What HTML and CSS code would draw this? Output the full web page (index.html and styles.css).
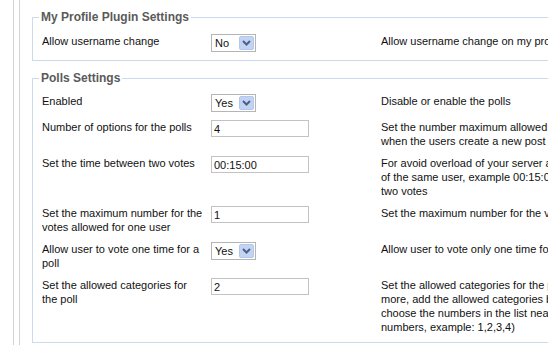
FILE: index.html
```html
<!DOCTYPE html>
<html lang="en">
<head>
    <meta charset="UTF-8">
    <title>Plugin Settings</title>
    <link rel="stylesheet" href="styles.css">
</head>
<body>
    <div class="outer">
        <div class="inner">

            <fieldset class="settings">
                <legend>My Profile Plugin Settings</legend>
                <table>
                    <tr>
                        <td class="label">Allow username change</td>
                        <td class="control">
                            <span class="select"><span class="value">No</span><span class="arrow"><svg width="9" height="6" viewBox="0 0 9 6"><path d="M1 1 L4.5 4.5 L8 1" fill="none" stroke="#4d6185" stroke-width="2"/></svg></span></span>
                        </td>
                        <td class="desc">Allow username change on my profile page</td>
                    </tr>
                </table>
            </fieldset>

            <fieldset class="settings">
                <legend>Polls Settings</legend>
                <table>
                    <tr>
                        <td class="label">Enabled</td>
                        <td class="control">
                            <span class="select"><span class="value">Yes</span><span class="arrow"><svg width="9" height="6" viewBox="0 0 9 6"><path d="M1 1 L4.5 4.5 L8 1" fill="none" stroke="#4d6185" stroke-width="2"/></svg></span></span>
                        </td>
                        <td class="desc">Disable or enable the polls</td>
                    </tr>
                    <tr>
                        <td class="label">Number of options for the polls</td>
                        <td class="control"><input type="text" class="field" value="4"></td>
                        <td class="desc">Set the number maximum allowed for the options<br>when the users create a new post with a poll</td>
                    </tr>
                    <tr>
                        <td class="label">Set the time between two votes</td>
                        <td class="control"><input type="text" class="field" value="00:15:00"></td>
                        <td class="desc">For avoid overload of your server and spam by the votes<br>of the same user, example 00:15:00 for 15 minutes between<br>two votes</td>
                    </tr>
                    <tr>
                        <td class="label">Set the maximum number for the votes allowed for one user</td>
                        <td class="control"><input type="text" class="field" value="1"></td>
                        <td class="desc">Set the maximum number for the votes allowed for one user</td>
                    </tr>
                    <tr>
                        <td class="label">Allow user to vote one time for a poll</td>
                        <td class="control">
                            <span class="select"><span class="value">Yes</span><span class="arrow"><svg width="9" height="6" viewBox="0 0 9 6"><path d="M1 1 L4.5 4.5 L8 1" fill="none" stroke="#4d6185" stroke-width="2"/></svg></span></span>
                        </td>
                        <td class="desc">Allow user to vote only one time for a poll</td>
                    </tr>
                    <tr>
                        <td class="label">Set the allowed categories for the poll</td>
                        <td class="control"><input type="text" class="field" value="2"></td>
                        <td class="desc">Set the allowed categories for the polls (if one or<br>more, add the allowed categories by comma, you can<br>choose the numbers in the list near the categories<br>numbers, example: 1,2,3,4)</td>
                    </tr>
                </table>
            </fieldset>

        </div>
    </div>
</body>
</html>
```

FILE: styles.css
```css
* {
    box-sizing: border-box;
}

body {
    margin: 0;
    background-color: #fff;
    font-family: 'Liberation Sans', Arial, sans-serif;
    font-size: 11px;
    line-height: 14px;
    color: #111;
    overflow: hidden;
}

/* the two grey rules on the left side of the panel */
.outer {
    margin-left: 13px;
    padding-left: 5px;
    border-left: 1px solid #d3d3d3;
    min-height: 345px;
    width: 760px;
}

.inner {
    padding-left: 12px;
    padding-top: 1px;
    border-left: 1px solid #d3d3d3;
    min-height: 345px;
}

.settings {
    margin: 9px 0 0 0;
    padding: 6px 0 4px 9px;
    border: 1px solid #c9dbec;
    min-width: 0;
}

.settings + .settings {
    margin-top: 10px;
    padding-top: 5px;
}

.settings legend {
    margin-left: -3px;
    padding: 0 2px;
    font-size: 12px;
    font-weight: bold;
    line-height: 14px;
    color: #5a5a5a;
}

.settings table {
    border-collapse: collapse;
}

.settings td {
    padding: 4px 0;
    vertical-align: top;
}

.settings td.label {
    width: 169px;
    padding-right: 7px;
}

.control {
    width: 170px;
}

.desc {
    white-space: nowrap;
}

/* fake windows style select box */
.select {
    display: flex;
    align-items: center;
    justify-content: space-between;
    width: 45px;
    height: 18px;
    padding: 0 1px 0 3px;
    border: 1px solid #b5b5b5;
    background-color: #fff;
}

.select .value {
    line-height: 14px;
}

.arrow {
    display: flex;
    align-items: center;
    justify-content: center;
    width: 15px;
    height: 14px;
    background-color: #c3d3f3;
    border: 1px solid #b4c6ec;
    border-radius: 2px;
}

.field {
    display: block;
    width: 98px;
    height: 17px;
    margin: 0;
    padding: 0 2px;
    border: 1px solid #c3c3c3;
    font-family: 'Liberation Sans', Arial, sans-serif;
    font-size: 11px;
    color: #111;
}
```
